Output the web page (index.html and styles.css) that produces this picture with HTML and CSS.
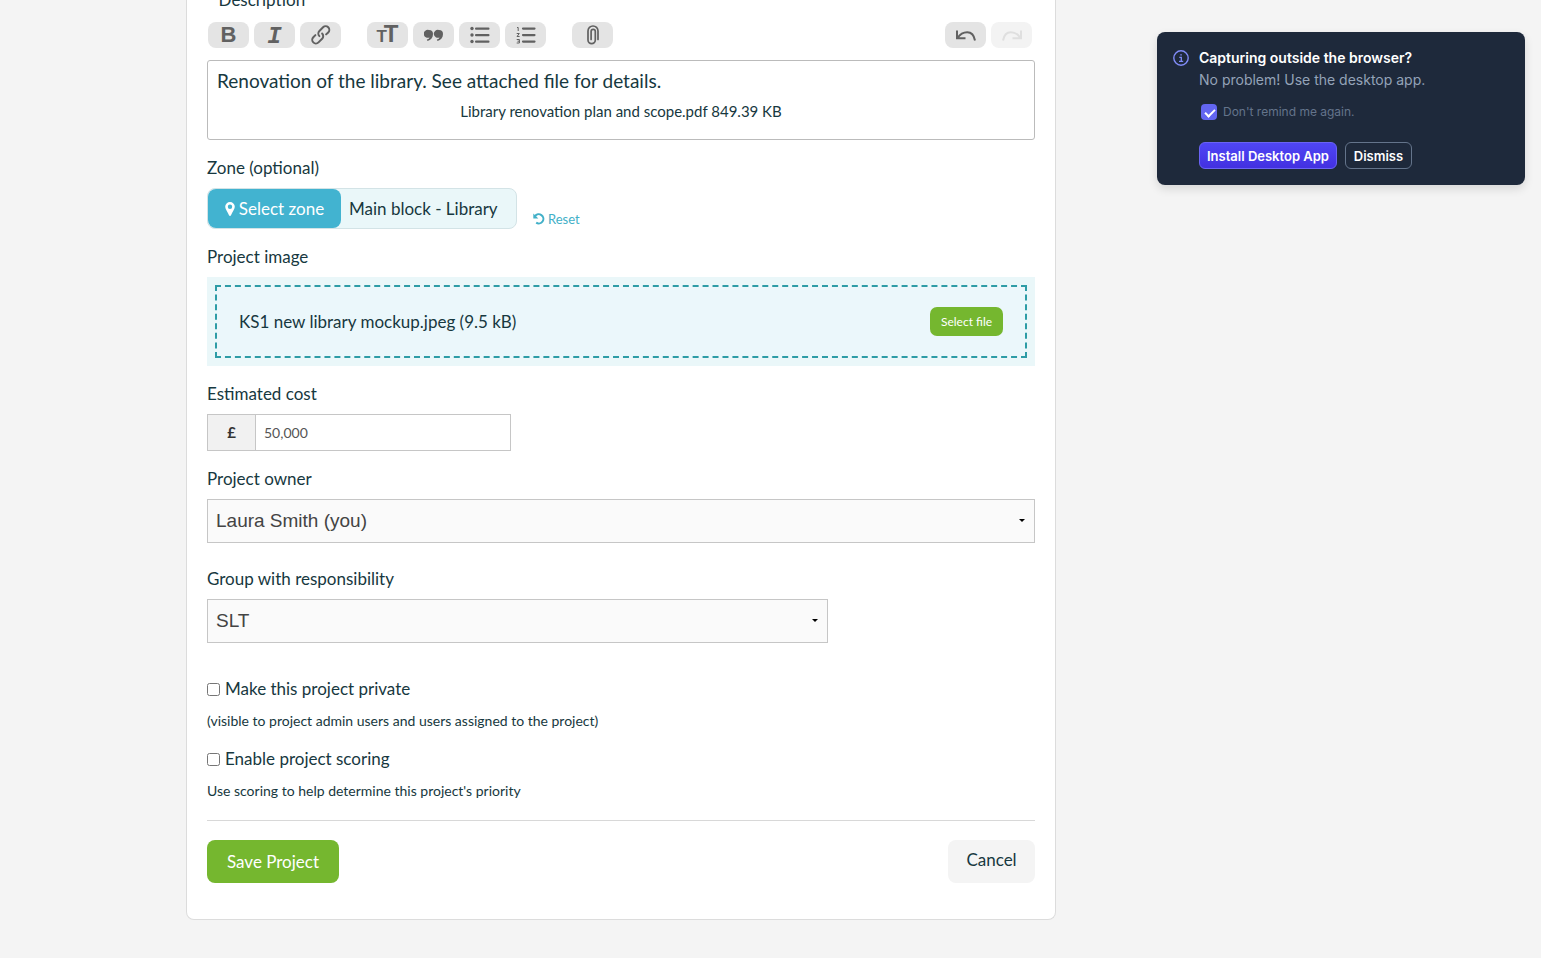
FILE: index.html
```html
<!DOCTYPE html>
<html lang="en">
<head>
    <meta charset="UTF-8">
    <meta name="viewport" content="width=device-width, initial-scale=1.0">
    <title>Edit Project</title>
    <link rel="stylesheet" href="styles.css">
</head>
<body>

    <!-- Project form -->
    <form class="project-card">

        <div class="field">
            <label for="description"><span class="required">*</span> Description</label>
            <div class="toolbar">
                <div class="tool-group">
                    <button type="button" class="tool" title="Bold"><span class="tool-bold">B</span></button>
                    <button type="button" class="tool" title="Italic"><span class="tool-italic">I</span></button>
                    <button type="button" class="tool" title="Link">
                        <svg width="26" height="26" viewBox="0 0 24 24" fill="currentColor"><path d="M9.88 13.7a4.3 4.3 0 0 1 0-6.07l3.37-3.37a4.26 4.26 0 0 1 6.07 0 4.3 4.3 0 0 1 0 6.06l-1.96 1.72a.91.91 0 1 1-1.3-1.3l1.97-1.71a2.46 2.46 0 0 0-3.48-3.48l-3.38 3.37a2.46 2.46 0 0 0 0 3.48.91.91 0 1 1-1.3 1.3z"/><path d="M4.25 19.46a4.3 4.3 0 0 1 0-6.07l1.93-1.9a.91.91 0 1 1 1.3 1.3l-1.93 1.9a2.46 2.46 0 0 0 3.48 3.48l3.37-3.38c.96-.96.96-2.52 0-3.48a.91.91 0 1 1 1.3-1.3 4.3 4.3 0 0 1 0 6.07l-3.38 3.38a4.26 4.26 0 0 1-6.07 0z"/></svg>
                    </button>
                </div>
                <div class="tool-group">
                    <button type="button" class="tool" title="Heading"><span class="tool-heading"><small>T</small>T</span></button>
                    <button type="button" class="tool" title="Quote">
                        <svg width="20" height="14" viewBox="0 0 20 14" fill="currentColor"><path d="M5 2a4 4 0 0 1 4 4c0 3.500-2 6-5.500 7l-.7-1.600C4.500 11 5.300 10.200 5.500 9.400A4 4 0 1 1 5 2zM15 2a4 4 0 0 1 4 4c0 3.500-2 6-5.500 7l-.7-1.600c1.700-.4 2.500-1.200 2.700-2A4 4 0 1 1 15 2z"/></svg>
                    </button>
                    <button type="button" class="tool" title="Bullets">
                        <svg width="20" height="18" viewBox="0 0 20 18" fill="currentColor"><circle cx="2" cy="2.500" r="1.700"/><circle cx="2" cy="9" r="1.700"/><circle cx="2" cy="15.500" r="1.700"/><rect x="5" y="1.500" width="14.500" height="2.200" rx="1"/><rect x="5" y="8" width="14.500" height="2.200" rx="1"/><rect x="5" y="14.500" width="14.500" height="2.200" rx="1"/></svg>
                    </button>
                    <button type="button" class="tool" title="Numbers">
                        <svg width="20" height="18" viewBox="0 0 20 18" fill="none" stroke="currentColor"><path d="M1 1.500h1.200V5M.7 7.500h2.600L1 10.500h2.600M.7 13.500h2.700v3.500H.7M1.500 15.200h1.900"/><path stroke-width="2.200" stroke-linecap="round" d="M7 2.600h11.500M7 9.100h11.500M7 15.600h11.500"/></svg>
                    </button>
                </div>
                <div class="tool-group">
                    <button type="button" class="tool" title="Attach Files">
                        <svg width="12" height="20" viewBox="0 0 12 20" fill="none" stroke="currentColor" stroke-width="1.700" stroke-linecap="round"><path d="M11 14.500V6A5 5 0 0 0 1 6v9a3.500 3.500 0 0 0 7.300 0V6.500a2.100 2.100 0 0 0-4.200 0v8"/></svg>
                    </button>
                </div>
                <div class="tool-group history">
                    <button type="button" class="tool" title="Undo">
                        <svg width="20" height="11" viewBox="0 0 20 11" fill="none" stroke="currentColor" stroke-width="2"><path d="M1 .5v7.700h8.500M1.500 8C6 1 17-1.500 19 10.500"/></svg>
                    </button>
                    <button type="button" class="tool" title="Redo" disabled>
                        <svg width="20" height="11" viewBox="0 0 20 11" fill="none" stroke="currentColor" stroke-width="2"><path d="M19 .5v7.700h-8.500M18.500 8C14 1 3-1.500 1 10.500"/></svg>
                    </button>
                </div>
            </div>
            <div class="editor" id="description" contenteditable="true" spellcheck="false">
                <div>Renovation of the library. See attached file for details.</div>
                <div class="attachment">Library renovation plan and scope.pdf 849.39 KB</div>
            </div>
        </div>

        <div class="field">
            <label for="zone">Zone (optional)</label>
            <div class="zone-row">
                <div class="zone-picker">
                    <button type="button" class="zone-button" id="zone">
                        <svg width="10" height="14" viewBox="0 0 10 14" fill="currentColor"><path fill-rule="evenodd" d="M5 0a4.800 4.800 0 0 1 4.800 4.800C9.800 7 7.500 9.500 6 13.300a1.100 1.100 0 0 1-2 0C2.500 9.500.2 7 .2 4.800A4.800 4.800 0 0 1 5 0zm0 2.600a2.200 2.200 0 1 0 0 4.400 2.200 2.200 0 0 0 0-4.400z"/></svg>
                        Select zone
                    </button>
                    <span class="zone-name">Main block - Library</span>
                </div>
                <a class="reset" href="#">
                    <svg width="12" height="12" viewBox="0 0 12 12" fill="none" stroke="currentColor" stroke-width="2"><path d="M2 3.200A4.600 4.600 0 1 1 3.200 9.700"/><path fill="currentColor" stroke="none" d="M.3.500v5h5z"/></svg>
                    Reset
                </a>
            </div>
        </div>

        <div class="field">
            <label for="image-button">Project image</label>
            <div class="upload">
                <div class="upload-inner">
                    <span>KS1 new library mockup.jpeg (9.5 kB)</span>
                    <button type="button" class="file-button" id="image-button">Select file</button>
                </div>
            </div>
        </div>

        <div class="field">
            <label for="cost">Estimated cost</label>
            <div class="cost">
                <span class="currency">£</span>
                <input type="text" id="cost" value="50,000">
            </div>
        </div>

        <div class="field select-field">
            <label for="owner">Project owner</label>
            <div class="select-wrap">
                <select id="owner">
                    <option>Laura Smith (you)</option>
                </select>
            </div>
        </div>

        <div class="field select-field">
            <label for="group">Group with responsibility</label>
            <div class="select-wrap group-wrap">
                <select id="group">
                    <option>SLT</option>
                </select>
            </div>
        </div>

        <div class="options">
            <div class="check">
                <input type="checkbox" id="private">
                <label for="private">Make this project private</label>
            </div>
            <p class="note">(visible to project admin users and users assigned to the project)</p>
            <div class="check">
                <input type="checkbox" id="scoring">
                <label for="scoring">Enable project scoring</label>
            </div>
            <p class="note">Use scoring to help determine this project's priority</p>
        </div>

        <div class="actions">
            <button type="submit" class="save-button">Save Project</button>
            <button type="button" class="cancel-button">Cancel</button>
        </div>
    </form>

    <!-- Desktop app notice -->
    <div class="notice">
        <svg class="notice-icon" width="16" height="16" viewBox="0 0 16 16" fill="none" stroke="currentColor"><circle cx="8" cy="8" r="7.200" stroke-width="1.400"/><path stroke-width="1.300" d="M6.300 7.300h2v4M6 11.300h4.200M7.300 4.800h1.500"/></svg>
        <div class="notice-body">
            <h2>Capturing outside the browser?</h2>
            <p>No problem! Use the desktop app.</p>
            <div class="remind">
                <input type="checkbox" id="remind" checked>
                <label for="remind">Don't remind me again.</label>
            </div>
            <div class="notice-buttons">
                <button type="button" class="install">Install Desktop App</button>
                <button type="button" class="dismiss">Dismiss</button>
            </div>
        </div>
    </div>

</body>
</html>
```
FILE: styles.css
```css
* {
    box-sizing: border-box;
    margin: 0;
    padding: 0;
}
body {
    font-family: Lato, sans-serif;
    font-size: 17px;
    line-height: 20px;
    color: #173840;
    background-color: #f4f4f4;
    overflow-x: hidden;
}
button,
input,
select {
    font-family: inherit;
}
button {
    border: none;
    cursor: pointer;
}

/* The card runs off the top of the window */
.project-card {
    max-width: 870px;
    margin: -10px 16px 38px 186px;
    padding: 0 20px 36px;
    background-color: white;
    border: 1px solid #dcdcdc;
    border-top: none;
    border-radius: 0 0 8px 8px;
}
.field {
    margin-bottom: 18px;
}
.field label {
    display: block;
    margin-bottom: 10px;
}
.required {
    color: #35535a;
}

/* Editor */
.toolbar {
    display: flex;
    gap: 26px;
    padding: 2px 3px 0 1px;
    margin-bottom: 12px;
}
.tool-group {
    display: flex;
    gap: 5px;
}
.history {
    margin-left: auto;
}
.tool {
    display: flex;
    align-items: center;
    justify-content: center;
    width: 41px;
    height: 26px;
    background-color: #e4e4e4;
    border-radius: 8px;
    color: #616161;
}
.tool:disabled {
    background-color: #f3f3f3;
    color: #dfdfdf;
}
.tool-bold,
.tool-heading {
    font-family: "Liberation Sans", sans-serif;
    font-weight: bold;
    font-size: 22px;
    line-height: 26px;
}
.tool-heading {
    font-size: 24px;
}
.tool-heading small {
    margin-right: -3px;
    font-size: 17px;
}
.tool-italic {
    padding-top: 4px;
    font-family: "Liberation Mono", monospace;
    font-weight: bold;
    font-style: italic;
    font-size: 24px;
    line-height: 26px;
}
.editor {
    min-height: 80px;
    padding: 8px 9px;
    border: 1px solid #bbb;
    border-radius: 3px;
    font-size: 19px;
    line-height: 24px;
    outline: none;
}
.attachment {
    margin-top: 6px;
    font-size: 15px;
    text-align: center;
}

/* Zone */
.zone-row {
    display: flex;
    align-items: flex-end;
    gap: 16px;
}
.zone-picker {
    display: flex;
    width: 310px;
    height: 41px;
    background-color: #eaf7f9;
    border: 1px solid #d3e3e6;
    border-radius: 8px;
}
.zone-button {
    display: flex;
    align-items: center;
    justify-content: center;
    gap: 4px;
    width: 133px;
    background-color: #42b3d0;
    border-radius: 8px;
    color: white;
    font-size: 17px;
}
.zone-name {
    padding: 10px 8px;
}
.reset {
    display: flex;
    align-items: center;
    gap: 3px;
    color: #42b0c8;
    font-size: 13px;
    text-decoration: none;
}

/* Upload */
.upload {
    padding: 8px;
    background-color: #eaf7f9;
}
.upload-inner {
    display: flex;
    align-items: center;
    justify-content: space-between;
    height: 73px;
    padding: 0 22px;
    border: 2px dashed #2e9ca6;
    background-color: #ebf7fb;
}
.file-button {
    width: 73px;
    height: 29px;
    background-color: #75b72f;
    border-radius: 7px;
    color: white;
    font-size: 12px;
}

/* Cost */
.cost {
    display: flex;
    width: 304px;
    height: 37px;
    border: 1px solid #c6c6c6;
}
.currency {
    width: 48px;
    background-color: #f1f1f1;
    border-right: 1px solid #c6c6c6;
    color: #333;
    font-size: 15px;
    font-weight: bold;
    line-height: 35px;
    text-align: center;
}
.cost input {
    flex: 1;
    min-width: 0;
    padding: 0 8px;
    border: none;
    outline: none;
    color: #555;
    font-size: 14px;
}

/* Selects */
.select-field {
    margin-bottom: 26px;
}
.select-wrap {
    position: relative;
}
.group-wrap {
    width: 75%;
}
.select-wrap select {
    display: block;
    width: 100%;
    height: 44px;
    padding: 0 8px 2px;
    appearance: none;
    background-color: #fafafa;
    border: 1px solid #c6c6c6;
    color: #444;
    font-family: "Liberation Sans", sans-serif;
    font-size: 19px;
}
.select-wrap::after {
    content: "";
    position: absolute;
    top: 20px;
    right: 10px;
    border: 3px solid transparent;
    border-top-color: black;
    border-bottom: none;
}

/* Options */
.options {
    padding-top: 10px;
    padding-bottom: 19px;
    border-bottom: 1px solid #d8d8d8;
}
.check {
    display: flex;
    align-items: center;
    gap: 5px;
}
.check input {
    width: 13px;
    height: 13px;
}
.note {
    margin: 12px 0 18px;
    font-size: 14px;
}
.note:last-child {
    margin-bottom: 0;
}
.actions {
    display: flex;
    justify-content: space-between;
    padding-top: 19px;
}
.save-button,
.cancel-button {
    height: 43px;
    border-radius: 8px;
    font-size: 17px;
}
.save-button {
    width: 132px;
    background-color: #75b72f;
    color: white;
}
.cancel-button {
    width: 87px;
    padding-bottom: 4px;
    background-color: #f4f4f4;
    color: #173840;
}

/* Notice */
.notice {
    position: absolute;
    top: 32px;
    right: 16px;
    display: flex;
    gap: 10px;
    width: 368px;
    padding: 16px;
    background-color: #1e293b;
    border-radius: 8px;
    box-shadow: 0 4px 10px rgba(0, 0, 0, 0.12);
    color: #94a3b8;
    font-family: Inter, sans-serif;
    font-size: 14px;
}
.notice-icon {
    flex: none;
    margin-top: 2px;
    color: #818cf8;
}
.notice h2 {
    color: white;
    font-size: 14px;
    font-weight: 600;
}
.notice p {
    margin-top: 2px;
}
.remind {
    display: flex;
    align-items: center;
    gap: 6px;
    margin: 12px 0 20px 2px;
    color: #64748b;
    font-size: 12px;
}
.remind input {
    position: relative;
    width: 16px;
    height: 16px;
    appearance: none;
    background-color: #6366f1;
    border-radius: 4px;
}
.remind input:checked::after {
    content: "";
    position: absolute;
    top: 3px;
    left: 6px;
    width: 4px;
    height: 8px;
    border: solid white;
    border-width: 0 2px 2px 0;
    transform: rotate(45deg);
}
.notice-buttons {
    display: flex;
    gap: 8px;
}
.notice-buttons button {
    height: 27px;
    border-radius: 6px;
    color: white;
    font-size: 13px;
    font-weight: 600;
}
.install {
    width: 138px;
    background: linear-gradient(#4f46f5, #4330e0);
    border: 1px solid #6a63f5;
}
.dismiss {
    width: 67px;
    background-color: transparent;
    border: 1px solid #64748b;
}
```
